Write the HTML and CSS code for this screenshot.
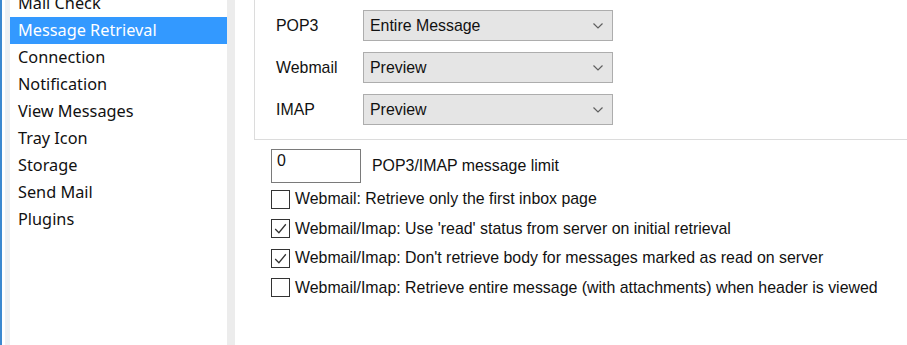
FILE: index.html
```html
<!DOCTYPE html>
<html lang="en">
  <head>
    <meta charset="UTF-8" />
    <meta name="viewport" content="width=device-width, initial-scale=1.0" />
    <title>Options - Message Retrieval</title>
    <link rel="stylesheet" href="styles.css">
  </head>
  <body>
    <div class="window">
      <!-- Options categories -->
      <nav class="nav">
        <ul class="nav-list">
          <li>Mail Check</li>
          <li class="selected">Message Retrieval</li>
          <li>Connection</li>
          <li>Notification</li>
          <li>View Messages</li>
          <li>Tray Icon</li>
          <li>Storage</li>
          <li>Send Mail</li>
          <li>Plugins</li>
        </ul>
      </nav>

      <!-- Settings page -->
      <main class="page">
        <div class="group">
          <div class="field-row">
            <span class="field-label">POP3</span>
            <div class="combo"><span>Entire Message</span><svg class="chevron" viewBox="0 0 10 6"><path d="M0.5 0.5 L5 5 L9.5 0.5" /></svg></div>
          </div>
          <div class="field-row">
            <span class="field-label">Webmail</span>
            <div class="combo"><span>Preview</span><svg class="chevron" viewBox="0 0 10 6"><path d="M0.5 0.5 L5 5 L9.5 0.5" /></svg></div>
          </div>
          <div class="field-row">
            <span class="field-label">IMAP</span>
            <div class="combo"><span>Preview</span><svg class="chevron" viewBox="0 0 10 6"><path d="M0.5 0.5 L5 5 L9.5 0.5" /></svg></div>
          </div>
        </div>

        <div class="options">
          <div class="limit-row">
            <div class="text-box">0</div>
            <span>POP3/IMAP message limit</span>
          </div>
          <div class="check">
            <span class="box"></span>
            <span>Webmail: Retrieve only the first inbox page</span>
          </div>
          <div class="check">
            <span class="box"><svg viewBox="0 0 16 16"><path d="M3 8.5 L6.5 12 L13 4" /></svg></span>
            <span>Webmail/Imap: Use 'read' status from server on initial retrieval</span>
          </div>
          <div class="check">
            <span class="box"><svg viewBox="0 0 16 16"><path d="M3 8.5 L6.5 12 L13 4" /></svg></span>
            <span>Webmail/Imap: Don't retrieve body for messages marked as read on server</span>
          </div>
          <div class="check">
            <span class="box"></span>
            <span>Webmail/Imap: Retrieve entire message (with attachments) when header is viewed</span>
          </div>
        </div>
      </main>
    </div>
  </body>
</html>
```

FILE: styles.css
```css
body {
  margin: 0;
  background-color: white;
  overflow: hidden;
}
.window {
  display: flex;
  height: 345px;
  overflow: hidden;
}

/* left category list */
.nav {
  display: flex;
  border-left: 2px solid #3b88cf;
  padding-left: 3px;
  flex-shrink: 0;
}
.nav-list {
  list-style: none;
  margin: -10px 0 0 0;
  padding: 0;
  width: 217px;
  border-left: 5px solid #eef0f2;
  border-right: 8px solid #ececec;
  font-family: "Noto Sans", sans-serif;
  font-size: 16.3px;
  color: #111;
}
.nav-list li {
  height: 27px;
  line-height: 27px;
  padding-left: 8px;
}
.nav-list .selected {
  background-color: #3399ff;
  color: white;
}

/* right settings page */
.page {
  flex: 1;
  padding-left: 19px;
  font-family: "Liberation Sans", Arial, sans-serif;
  font-size: 15.9px;
  color: #111;
}
.group {
  border-left: 1px solid #dcdcdc;
  border-bottom: 1px solid #dcdcdc;
  padding: 10px 0 14px 21px;
  display: flex;
  flex-direction: column;
  gap: 11px;
}
.field-row {
  display: flex;
  align-items: center;
}
.field-label {
  width: 87px;
}
.combo {
  box-sizing: border-box;
  width: 250px;
  height: 31px;
  border: 1px solid #adadad;
  background-color: #e5e5e5;
  display: flex;
  align-items: center;
  justify-content: space-between;
  padding: 0 9px 0 6px;
}
.chevron {
  width: 10px;
  height: 6px;
  fill: none;
  stroke: #606060;
  stroke-width: 1.2;
}

.options {
  padding: 9px 0 0 17px;
}
.limit-row {
  display: flex;
  align-items: center;
  gap: 11px;
  margin-bottom: 6px;
}
.text-box {
  width: 83px;
  height: 32px;
  border: 1px solid #7a7a7a;
  padding: 0 0 0 5px;
  line-height: 22px;
}
.check {
  display: flex;
  align-items: center;
  gap: 5px;
  height: 20px;
  margin-bottom: 9.5px;
}
.box {
  width: 17px;
  height: 17px;
  border: 1px solid #333;
  background-color: white;
  display: flex;
  flex-shrink: 0;
}
.box svg {
  width: 17px;
  height: 17px;
  fill: none;
  stroke: #333;
  stroke-width: 1.2;
}
```
